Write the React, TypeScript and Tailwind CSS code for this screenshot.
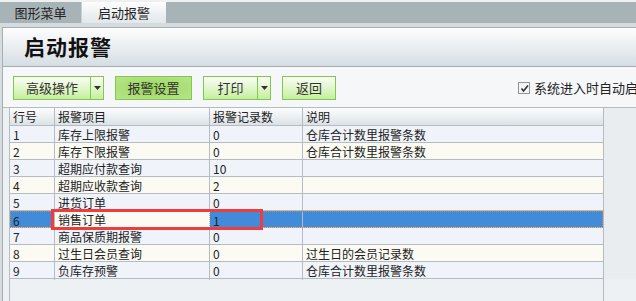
import React from 'react'

const rows = [
  { no: '1', item: '库存上限报警', count: '0', note: '仓库合计数里报警条数' },
  { no: '2', item: '库存下限报警', count: '0', note: '仓库合计数里报警条数' },
  { no: '3', item: '超期应付款查询', count: '10', note: '' },
  { no: '4', item: '超期应收款查询', count: '2', note: '' },
  { no: '5', item: '进货订单', count: '0', note: '' },
  { no: '6', item: '销售订单', count: '1', note: '' },
  { no: '7', item: '商品保质期报警', count: '0', note: '' },
  { no: '8', item: '过生日会员查询', count: '0', note: '过生日的会员记录数' },
  { no: '9', item: '负库存预警', count: '0', note: '仓库合计数里报警条数' },
]

const cols = 'grid grid-cols-[45px_155px_93px_299px]'

function Caret() {
  return (
    <svg width="7" height="4" viewBox="0 0 7 4">
      <path d="M0 0h7L3.5 4z" fill="#333" />
    </svg>
  )
}

function SplitButton({ label, w }: { label: string; w: string }) {
  return (
    <div className="flex h-[24px] border border-[#7fca4c] bg-gradient-to-b from-[#fbfef7] to-[#c6ee9d]">
      <div className={`${w} flex items-center justify-center border-r border-[#7fca4c] text-[13px] text-[#333]`}>{label}</div>
      <div className="w-[12px] flex items-center justify-center">
        <Caret />
      </div>
    </div>
  )
}

export default function App() {
  return (
    <div
      className="relative w-[636px] h-[301px] overflow-hidden bg-[#d7dcdf] text-[#222]"
      style={{ fontFamily: '"Noto Sans CJK SC", "Liberation Sans", sans-serif' }}
    >
      {/* Tabs */}
      <div className="h-[23px] border-t-2 border-[#eef1f2] bg-[#a8b3b8] flex">
        <div className="w-[82px] flex items-center justify-center text-[13px] text-[#222] border-r border-[#c9d0d3]">
          图形菜单
        </div>
        <div className="w-[84px] flex items-center justify-center text-[13px] text-[#222] bg-gradient-to-b from-[#fdfdfd] to-[#e2e7ea]">
          启动报警
        </div>
      </div>
      <div className="h-[4px] bg-[#d5dadd]" />

      {/* Panel */}
      <div className="ml-[2px] border-l border-t border-[#a7afb4] bg-[#eef1f4] h-[274px]">
        <div className="h-[39px] border-b border-[#a5adb2] bg-gradient-to-b from-[#fdfefe] to-[#d6dee3] flex items-center pl-[21px]">
          <span className="text-[21px] font-bold text-[#111] tracking-[1px]">启动报警</span>
        </div>

        {/* Toolbar */}
        <div className="h-[40px] bg-[#f6f7f9] flex items-start pt-[9px] pl-[10px]">
          <SplitButton label="高级操作" w="w-[77px]" />
          <div className="ml-[11px] w-[77px] h-[24px] flex items-center justify-center border border-[#7fca4c] bg-[radial-gradient(ellipse_at_center,#9bd65f,#b7e58a)] text-[13px] text-[#333]">
            报警设置
          </div>
          <div className="ml-[11px]">
            <SplitButton label="打印" w="w-[54px]" />
          </div>
          <div className="ml-[11px] w-[54px] h-[24px] flex items-center justify-center border border-[#7fca4c] bg-gradient-to-b from-[#fbfef7] to-[#c6ee9d] text-[13px] text-[#333]">
            返回
          </div>
          <div className="ml-auto flex items-center h-[24px] pl-[4px] whitespace-nowrap">
            <div className="w-[12px] h-[12px] border border-[#8e969b] bg-[#f4f4f4] flex items-center justify-center">
              <svg width="9" height="9" viewBox="0 0 9 9">
                <path d="M1.5 4.5l2 2.5L8 1.5" stroke="#333" strokeWidth="1.6" fill="none" />
              </svg>
            </div>
            <span className="ml-[4px] text-[13px] text-[#222] w-[102px] overflow-hidden">系统进入时自动启动</span>
          </div>
        </div>

        {/* Table area */}
        <div className="border-t border-[#b5bcc1] bg-[#eef1f4] h-[194px] pl-[6px] flex">
          <div className="w-[595px] border-l border-r border-[#b5bcc1] text-[12px]">
            <div className={`${cols} h-[18px] border-b border-[#b5bcc1] bg-gradient-to-b from-[#fdfdfd] to-[#dce2e6]`}>
              {['行号', '报警项目', '报警记录数', '说明'].map((h, i) => (
                <div key={h} className={`pl-[3px] flex items-center ${i < 3 ? 'border-r border-[#b5bcc1]' : ''}`}>
                  {h}
                </div>
              ))}
            </div>
            {rows.map((r, idx) => {
              const sel = r.no === '6'
              const bg = sel ? 'bg-[#418bd8]' : idx % 2 === 0 ? 'bg-[#f0f4fa]' : 'bg-[#fbfbf3]'
              return (
                <div key={r.no} className={`${cols} h-[17px] border-b border-[#b5bcc1] ${bg} ${sel ? 'outline outline-1 outline-dotted outline-[#d08a40] -outline-offset-1' : ''}`}>
                  <div className="pl-[3px] flex items-center border-r border-[#b5bcc1]">{r.no}</div>
                  <div className={`pl-[3px] flex items-center border-r border-[#b5bcc1] ${sel ? 'bg-[#fbfbf4] border-b border-b-[#222] border-dotted' : ''}`}>
                    {r.item}
                  </div>
                  <div className="pl-[3px] flex items-center border-r border-[#b5bcc1]">{r.count}</div>
                  <div className="pl-[3px] flex items-center">{r.note}</div>
                </div>
              )
            })}
          </div>
          <div className="flex-1 bg-[#e9edf0] h-[171px]" />
        </div>
      </div>

      {/* Annotation box */}
      <div className="absolute left-[51px] top-[209px] w-[212px] h-[21px] border-[3px] border-[#f03c3c]" />
    </div>
  )
}
